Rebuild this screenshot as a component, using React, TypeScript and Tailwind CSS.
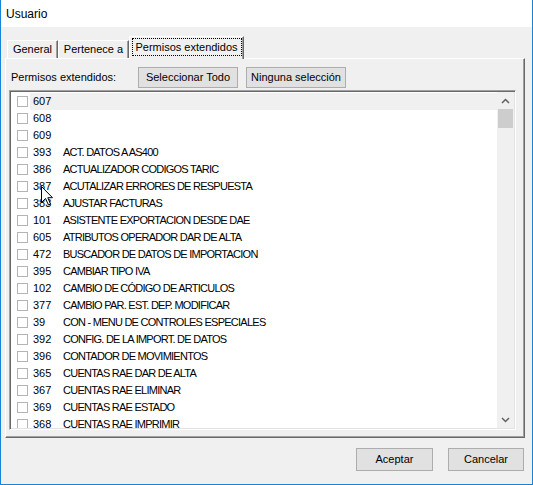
import React from "react";

type Perm = { id: string; name: string };

const perms: Perm[] = [
  { id: "607", name: "" },
  { id: "608", name: "" },
  { id: "609", name: "" },
  { id: "393", name: "ACT. DATOS A AS400" },
  { id: "386", name: "ACTUALIZADOR CODIGOS TARIC" },
  { id: "387", name: "ACUTALIZAR ERRORES DE RESPUESTA" },
  { id: "383", name: "AJUSTAR FACTURAS" },
  { id: "101", name: "ASISTENTE EXPORTACION DESDE DAE" },
  { id: "605", name: "ATRIBUTOS OPERADOR DAR DE ALTA" },
  { id: "472", name: "BUSCADOR DE DATOS DE IMPORTACION" },
  { id: "395", name: "CAMBIAR TIPO IVA" },
  { id: "102", name: "CAMBIO DE CÓDIGO DE ARTICULOS" },
  { id: "377", name: "CAMBIO PAR. EST. DEP. MODIFICAR" },
  { id: "39", name: "CON - MENU DE CONTROLES ESPECIALES" },
  { id: "392", name: "CONFIG. DE LA IMPORT. DE DATOS" },
  { id: "396", name: "CONTADOR DE MOVIMIENTOS" },
  { id: "365", name: "CUENTAS RAE DAR DE ALTA" },
  { id: "367", name: "CUENTAS RAE ELIMINAR" },
  { id: "369", name: "CUENTAS RAE ESTADO" },
  { id: "368", name: "CUENTAS RAE IMPRIMIR" },
];

const Button = ({ label, className }: { label: string; className: string }) => (
  <button className={`bg-[#e1e1e1] border border-[#adadad] flex items-center justify-center ${className}`}>
    {label}
  </button>
);

const Chevron = ({ up }: { up?: boolean }) => (
  <svg width="9" height="6" viewBox="0 0 9 6">
    <path
      d={up ? "M1 5 L4.5 1.5 L8 5" : "M1 1 L4.5 4.5 L8 1"}
      fill="none"
      stroke="#606060"
      strokeWidth="1.5"
    />
  </svg>
);

export default function App() {
  return (
    <div className="w-[533px] h-[485px] bg-[#f0f0f0] border-x border-b border-[#1883d7] flex flex-col font-['Liberation_Sans',Arial,sans-serif] text-[11px] text-black">
      {/* title bar */}
      <div className="h-[27px] bg-white flex items-center pl-[5px] text-[12px]">Usuario</div>

      <div className="flex flex-col pl-[4px] pr-[7px] pt-[9px]">
        {/* tabs */}
        <div className="h-[22px] flex items-end pl-[2px] relative z-10">
          <div className="h-[18px] w-[51px] border-t border-l border-white border-r border-r-[#696969] shadow-[inset_-1px_0_0_#a0a0a0] flex items-center justify-center">
            General
          </div>
          <div className="h-[18px] w-[71px] border-t border-l border-white border-r border-r-[#696969] shadow-[inset_-1px_0_0_#a0a0a0] flex items-center justify-center">
            Pertenece a
          </div>
          <div className="h-[23px] w-[115px] -mb-[1px] bg-[#f0f0f0] border-t border-l border-white border-r border-r-[#696969] shadow-[inset_-1px_0_0_#a0a0a0] flex items-start justify-center pt-[1px]">
            <span className="border border-dotted border-black h-[18px] w-[110px] whitespace-nowrap flex items-center justify-center">
              Permisos extendidos
            </span>
          </div>
        </div>

        {/* panel */}
        <div className="h-[380px] border-t border-l border-white border-r border-b border-r-[#696969] border-b-[#696969] shadow-[inset_-1px_-1px_0_#a0a0a0] flex flex-col pt-[8px] pl-[3px]">
          <div className="h-[21px] flex items-center">
            <span className="w-[129px] pl-[2px]">Permisos extendidos:</span>
            <Button label="Seleccionar Todo" className="w-[100px] h-[21px]" />
            <Button label="Ninguna selección" className="w-[100px] h-[21px] ml-[8px]" />
          </div>

          <div className="mt-[2px] w-[507px] h-[340px] border border-[#a0a0a0] border-r-white border-b-white shadow-[inset_1px_1px_0_#696969,inset_-1px_-1px_0_#e3e3e3] p-[1px] flex relative">
            <div className="flex-1 bg-white overflow-hidden flex flex-col pt-[1px]">
              {perms.map((p, i) => (
                <div key={p.id} className="h-[17px] shrink-0 flex items-center pl-[6px]">
                  <span className="w-[11px] h-[11px] border border-[#b4b4b4] bg-white shrink-0" />
                  <div className={`flex-1 h-full flex items-center pl-[5px] ml-[2px] ${i === 0 ? "bg-[#f0f0f0]" : ""}`}>
                    <span className="w-[32px] -ml-[4px] pl-[2px]">{p.id}</span>
                    <span className="tracking-[-0.75px]">{p.name}</span>
                  </div>
                </div>
              ))}
            </div>
            {/* scrollbar */}
            <div className="w-[17px] bg-[#f0f0f0] flex flex-col">
              <div className="h-[17px] flex items-center justify-center">
                <Chevron up />
              </div>
              <div className="h-[19px] mx-[1px] bg-[#cdcdcd]" />
              <div className="flex-1" />
              <div className="h-[17px] flex items-center justify-center">
                <Chevron />
              </div>
            </div>
            {/* mouse pointer */}
            <svg
              className="absolute left-[31px] top-[95px]"
              width="13"
              height="20"
              viewBox="0 0 13 20"
            >
              <path
                d="M0.5 0.5 L0.5 16.5 L4.5 12.5 L7.5 19 L9.5 18 L6.8 11.7 L11.5 11.7 Z"
                fill="white"
                stroke="#000"
                strokeWidth="1"
              />
            </svg>
          </div>
        </div>

        {/* bottom buttons */}
        <div className="h-[23px] mt-[10px] flex justify-end pr-[1px]">
          <Button label="Aceptar" className="w-[77px] h-[23px]" />
          <Button label="Cancelar" className="w-[76px] h-[23px] ml-[15px]" />
        </div>
      </div>
    </div>
  );
}
